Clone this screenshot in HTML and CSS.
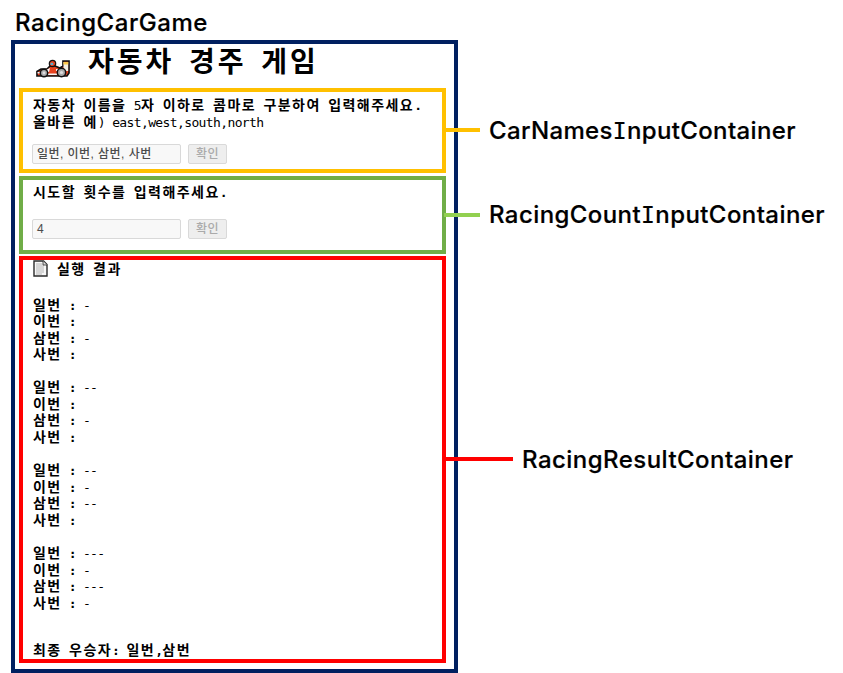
FILE: index.html
```html
<!DOCTYPE html>
<html lang="ko">
<head>
<meta charset="utf-8">
<title>RacingCarGame</title>
<link rel="stylesheet" href="styles.css">
</head>
<body>
<div class="label label-game">RacingCarGame</div>
<main class="game">
  <h1 class="title">
    <svg class="car" viewBox="0 0 34 19" width="34" height="19">
      <path d="M1 17V12.500L5 10H11L14 7H19L24 9L27 7V2H33V14L31 17Z" fill="#e8431f" stroke="#111" stroke-width="1.700"/>
      <path d="M27.500 3H32.200V12H29L27.500 9Z" fill="#f4f0e4"/>
      <path d="M27.500 3H32.200V5.500H27.500Z" fill="#fbc94b"/>
      <path d="M10 11L14 9L13 13H10ZM20 10H26V12H20Z" fill="#fff"/>
      <path d="M11.500 15.200H21M1.500 13.800H5" stroke="#f4f4f4" stroke-width="1.500"/>
      <circle cx="16.500" cy="4.500" r="3.200" fill="#e8431f" stroke="#111" stroke-width="1.200"/>
      <path d="M14.500 3.800H17.200V6H14.500Z" fill="#55add0"/>
      <circle cx="8" cy="14" r="3.700" fill="#aaa" stroke="#111" stroke-width="1.500"/>
      <circle cx="25.500" cy="13.500" r="4.200" fill="#aaa" stroke="#111" stroke-width="1.500"/>
      <circle cx="8" cy="14" r="1.400" fill="#ddd"/>
      <circle cx="25.500" cy="13.500" r="1.600" fill="#ddd"/>
    </svg>
    <span>자동차 경주 게임</span>
  </h1>

  <section class="panel names">
    <p class="text">자동차 이름을 <span class="en">5</span>자 이하로 콤마로 구분하여 입력해주세요<span class="en b">.</span><br>올바른 예<span class="en">) east,west,south,north</span></p>
    <div class="row">
      <div class="input">일번, 이번, 삼번, 사번</div>
      <div class="button">확인</div>
    </div>
    <div class="line"></div>
    <div class="label callout">CarNames<span class="serif-i">I</span>nputContainer</div>
  </section>

  <section class="panel count">
    <p class="text">시도할 횟수를 입력해주세요<span class="en b">.</span></p>
    <div class="row">
      <div class="input">4</div>
      <div class="button">확인</div>
    </div>
    <div class="line"></div>
    <div class="label callout">RacingCount<span class="serif-i">I</span>nputContainer</div>
  </section>

  <section class="panel result">
    <h2 class="text heading">
      <svg class="doc" viewBox="0 0 15 17" width="15" height="17">
        <path d="M1 1H10.500L14 4.500V16H1Z" fill="#f7f7f7" stroke="#2b2b2b" stroke-width="1.400"/>
        <path d="M3 4H9M3 6H11M3 8H11M3 10H11M3 12H11M3 14H9" stroke="#b5b5b5"/>
        <path d="M10 1V5H14" fill="#ddd" stroke="#2b2b2b" stroke-width=".8"/>
      </svg>
      <span>실행 결과</span>
    </h2>
    <div class="rounds">
      <div class="text">일번<span class="en"> <b>:</b> -</span><br>이번<span class="en"> <b>:</b></span><br>삼번<span class="en"> <b>:</b> -</span><br>사번<span class="en"> <b>:</b></span></div>
      <div class="text">일번<span class="en"> <b>:</b> --</span><br>이번<span class="en"> <b>:</b></span><br>삼번<span class="en"> <b>:</b> -</span><br>사번<span class="en"> <b>:</b></span></div>
      <div class="text">일번<span class="en"> <b>:</b> --</span><br>이번<span class="en"> <b>:</b> -</span><br>삼번<span class="en"> <b>:</b> --</span><br>사번<span class="en"> <b>:</b></span></div>
      <div class="text">일번<span class="en"> <b>:</b> ---</span><br>이번<span class="en"> <b>:</b> -</span><br>삼번<span class="en"> <b>:</b> ---</span><br>사번<span class="en"> <b>:</b> -</span></div>
    </div>
    <p class="text winner">최종 우승자<span class="en b">: </span>일번<span class="en b">,</span>삼번</p>
    <div class="line"></div>
    <div class="label callout">RacingResultContainer</div>
  </section>
</main>
</body>
</html>
```
FILE: styles.css
```css
* { box-sizing: border-box; }
html, body { margin: 0; height: 673px; overflow: hidden; background: #fff; color: #000; }
body { font-family: "Liberation Sans", "Noto Sans CJK KR", sans-serif; }
p, h1, h2 { margin: 0; }

.label {
  font: 500 24px/30px Inter, sans-serif;
  white-space: nowrap;
  -webkit-text-stroke: .2px #000;
}
.label-game { height: 40px; padding: 8px 0 0 15px; letter-spacing: .55px; }
.serif-i { font-family: "DejaVu Sans Mono", monospace; font-size: 23px; -webkit-text-stroke: .2px #000; }

.game {
  width: 447px;
  height: 633px;
  margin-left: 11px;
  padding: 0 4px;
  border: 4px solid #002060;
  display: flex;
  flex-direction: column;
}
.title {
  height: 44px;
  display: flex;
  padding-left: 17px;
  gap: 18px;
  font-size: 28px;
  line-height: 38px;
  font-weight: 700;
  letter-spacing: 3.05px;
  word-spacing: 3.8px;
  white-space: nowrap;
}
.car { margin-top: 15px; }

.panel { position: relative; width: 427px; border: 4px solid; padding-left: 10px; flex: none; }
.names { height: 85px; border-color: #ffc000; padding-top: 5px; }
.count { height: 78px; border-color: #70ad47; margin-top: 3px; padding-top: 4px; }
.result { height: 407px; border-color: #f00; margin-top: 2px; }

.text {
  font-size: 14px;
  line-height: 16.57px;
  font-weight: 700;
  letter-spacing: 1.45px;
  word-spacing: 2.05px;
  white-space: nowrap;
}
.en {
  font-family: "DejaVu Sans Mono", monospace;
  font-size: 13px;
  line-height: 1;
  font-weight: 400;
  letter-spacing: -.62px;
  word-spacing: 0;
  white-space: pre;
}
.en.b { font-weight: 700; }
.rounds .en { letter-spacing: -.72px; }

.row { display: flex; gap: 7px; margin-left: -1px; }
.names .row { margin-top: 14px; }
.count .row { margin-top: 18px; }
.input, .button {
  height: 20px;
  border: 1px solid #d9d9d9;
  border-radius: 2px;
  font-size: 12px;
  line-height: 18px;
  white-space: nowrap;
}
.input { width: 149px; padding-left: 4px; background: #f8f8f8; color: #4b4b4b; letter-spacing: .45px; font-weight: 500; }
.button { width: 39px; background: #eee; color: #aaa; text-align: center; font-weight: 500; letter-spacing: .4px; }

.heading { display: flex; gap: 9px; height: 36.5px; }
.heading span { padding-top: 1px; }
.rounds { display: flex; flex-direction: column; gap: 16.57px; }
.winner { margin-top: 31px; }

.line { position: absolute; left: 423px; width: 34px; height: 4px; }
.callout { position: absolute; left: 466px; letter-spacing: .35px; }
.names .line { top: 36px; background: #ffc000; }
.names .callout { top: 24px; }
.count .line { left: 421px; width: 36px; top: 33px; background: #92d050; }
.count .callout { top: 20px; letter-spacing: .42px; }
.result .line { top: 197px; width: 67px; background: #f00; }
.result .callout { left: 499px; top: 185px; letter-spacing: .46px; }
```
